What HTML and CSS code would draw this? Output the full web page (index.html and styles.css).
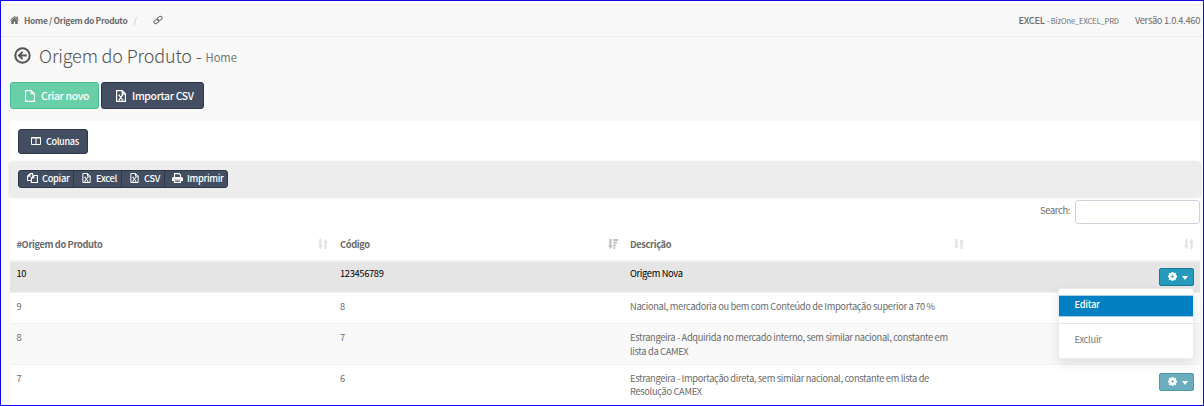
FILE: index.html
```html
<!DOCTYPE html>
<html lang="pt-BR">
<head>
<meta charset="utf-8">
<title>Origem do Produto</title>
<link rel="stylesheet" href="styles.css">
</head>
<body>
<svg class="defs" aria-hidden="true">
  <symbol id="sort" viewBox="0 0 10 10"><path d="M1.3 0h2.2v6.6H5L2.5 10 0 6.6h1.3zM6.4 10h2.2V3.4H10L7.5 0 5 3.4h1.4z"/></symbol>
  <symbol id="sort-desc" viewBox="0 0 10 10"><path d="M1.3 0h2.2v6.6H5L2.5 10 0 6.6h1.3zM5.3 0H10v2H5.3zM5.3 2.8h3.8v1.8H5.3zM5.3 5.4h2.8v1.8H5.3zM5.3 8H7.2v2H5.3z"/></symbol>
  <symbol id="excel" viewBox="0 0 10 12"><path d="M.6.6h5.6l3.2 3.2v7.6H.6zM6.2.6v3.2h3.2M3 5.2l3.6 4.6M6.6 5.2 3 9.8M2.5 5.2h1.6M5.6 5.2h1.6M2.5 9.8h1.6M5.6 9.8h1.6" fill="none" stroke="currentColor" stroke-width="1.2"/></symbol>
  <symbol id="gear" viewBox="0 0 10 10"><path fill-rule="evenodd" d="M4 0h2l.3 1.1.8.35L8.2.8l1 1-.65 1.1.35.8L10 4v2l-1.1.3-.35.8.65 1.1-1 1-1.1-.65-.8.35L6 10H4l-.3-1.1-.8-.35-1.1.65-1-1 .65-1.1-.35-.8L0 6V4l1.1-.3.35-.8L.8 1.8l1-1 1.1.65.8-.35zM5 3.7a1.3 1.3 0 1 0 0 2.6 1.3 1.3 0 0 0 0-2.6z"/></symbol>
</svg>
<div class="page">
  <header class="topbar">
    <nav class="crumbs">
      <svg class="home" viewBox="0 0 9 8"><path d="M4.5 0 6.6 1.8V.5h1.3v2.4L9 4l-.6.6-3.9-3.3L.6 4.6 0 4zM1.3 4.4 4.5 1.7l3.2 2.7V8H5.2V5.6H3.8V8H1.3z"/></svg>
      <b>Home / Origem do Produto</b><span class="slash">/</span>
      <svg class="link" viewBox="0 0 10 10"><g fill="none" stroke="currentColor" stroke-width="1"><rect x="4" y="1.8" width="5.2" height="3.4" rx="1.7" transform="rotate(-35 6.6 3.5)"/><rect x=".8" y="4.8" width="5.2" height="3.4" rx="1.7" transform="rotate(-35 3.4 6.5)"/></g></svg>
    </nav>
    <div class="env"><b>EXCEL</b><small>- BizOne_EXCEL_PRD</small></div>
    <div class="version">Versão 1.0.4.460</div>
  </header>
  <h1 class="title">
    <svg class="back" viewBox="0 0 17 17"><circle cx="8.5" cy="8.5" r="7.2" fill="none" stroke="currentColor" stroke-width="2"/><path d="M3.5 8.5 8 4.2l1.2 1.2-2 2h5.6v2.2H7.2l2 2L8 12.8z"/></svg>
    <span class="name">Origem do Produto -</span><small>Home</small>
  </h1>
  <div class="actions">
    <button class="btn new"><svg class="i-file" viewBox="0 0 10 12"><path d="M.6.6h5.6l3.2 3.2v7.6H.6zM6.2.6v3.2h3.2" fill="none" stroke="currentColor" stroke-width="1.1"/></svg><span>Criar novo</span></button>
    <button class="btn dark"><svg class="i-file"><use href="#excel"/></svg><span>Importar CSV</span></button>
  </div>
  <main class="panel">
    <button class="btn dark columns"><svg class="i-cols" viewBox="0 0 10 8"><path d="M.5.5h9v7h-9zM5 .5v7M0 1h10" fill="none" stroke="currentColor"/></svg><span>Colunas</span></button>
    <div class="toolbar">
      <div class="group">
        <button class="copy"><svg viewBox="0 0 11 10"><path d="M3 .6h2.6v2M3 .6.6 3v4.5h3.6M3 .6v2.5H.6M6.8 2.5h3.6v7H4.4V5zM6.8 2.5V5H4.4" fill="none" stroke="currentColor" stroke-width="1.1"/></svg><span>Copiar</span></button>
        <button class="xls"><svg><use href="#excel"/></svg><span>Excel</span></button>
        <button class="csv"><svg><use href="#excel"/></svg><span>CSV</span></button>
        <button class="print"><svg viewBox="0 0 11 10"><path d="M2.5 4.5V.6h4.6l1.4 1.4v2.5M2.5 7h6v2.4h-6z" fill="none" stroke="currentColor" stroke-width="1.1"/><path d="M1.3 4h8.4L11 5v3H9V6.5H2V8H0V5z"/></svg><span>Imprimir</span></button>
      </div>
    </div>
    <div class="search"><label for="q">Search:</label><input id="q" type="text"></div>
    <div class="table">
      <div class="row head">
        <div><b>#Origem do Produto</b><svg><use href="#sort"/></svg></div>
        <div><b>Código</b><svg class="on"><use href="#sort-desc"/></svg></div>
        <div><b>Descrição</b><svg><use href="#sort"/></svg></div>
        <div><svg><use href="#sort"/></svg></div>
      </div>
      <div class="row r1 selected">
        <div>10</div><div>123456789</div><div>Origem Nova</div>
        <div class="act">
          <button class="cog"><svg><use href="#gear"/></svg><i></i></button>
          <div class="menu"><a class="active">Editar</a><hr><a>Excluir</a></div>
        </div>
      </div>
      <div class="row r2"><div>9</div><div>8</div><div>Nacional, mercadoria ou bem com Conteúdo de Importação superior a 70 %</div><div></div></div>
      <div class="row r3"><div>8</div><div>7</div><div>Estrangeira - Adquirida no mercado interno, sem similar nacional, constante em<br>lista da CAMEX</div><div></div></div>
      <div class="row r4"><div>7</div><div>6</div><div>Estrangeira - Importação direta, sem similar nacional, constante em lista de<br>Resolução CAMEX</div><div class="act"><button class="cog faded"><svg><use href="#gear"/></svg><i></i></button></div></div>
    </div>
  </main>
</div>
</body>
</html>
```
FILE: styles.css
```css
* { box-sizing: border-box; }
body { margin: 0; overflow: hidden; }
.defs { position: absolute; width: 0; height: 0; }
svg { fill: currentColor; flex: none; }
.page {
  width: 1204px; height: 406px; overflow: hidden;
  border: 1px solid #1407f0; background: #f9f9f9;
  font: 9.3px/14px "Noto Sans CJK SC", "Noto Sans", sans-serif;
  letter-spacing: -.33px;
  color: #6b6b6b;
}
button { font: inherit; letter-spacing: inherit; margin: 0; padding: 0; display: flex; align-items: center; white-space: nowrap; }
.topbar {
  height: 36px; border-top: 3px solid #fff; border-bottom: 1px solid #ececec;
  box-shadow: inset 0 1px #ececec; display: flex; align-items: center;
  padding: 0 3px 0 9px; white-space: nowrap;
}
.crumbs { display: flex; align-items: center; flex: 1; font-size: 8.5px; letter-spacing: -.35px; }
.home { width: 9px; height: 8px; margin-right: 5px; }
.slash { color: #bbb; margin-left: 6px; }
.link { width: 10px; height: 10px; margin-left: 17px; }
.env b { font-size: 9.3px; font-weight: 500; letter-spacing: -.3px; }
.env small { font-size: 7.5px; margin-left: 2px; letter-spacing: -.1px; }
.version { margin-left: 16px; font-size: 9.3px; letter-spacing: -.3px; }
.title { height: 45px; margin: 0; padding: 0 0 7px 13px; display: flex; align-items: center; font-weight: 300; color: #515253; line-height: 24px; letter-spacing: -.15px; }
.back { width: 17px; height: 17px; margin: -2px 8px 0 0; }
.name { font-size: 18px; margin-top: -3px; }
.title small { font-size: 11.3px; font-weight: 400; color: #777; margin: 2px 0 0 4px; }
.actions { display: flex; gap: 2px; padding-left: 9px; height: 39px; align-items: flex-start; }
.btn { height: 27px; border-radius: 3px; border: 1px solid #2e3748; color: #fff; font-size: 10.4px; font-weight: 500; padding-left: 14px; }
.btn.dark { background: #434e62; width: 103px; }
.btn.new { background: #68cfa9; border-color: #45c08d; width: 89px; }
.i-file { width: 10px; height: 12px; margin-right: 6px; }
.panel { margin: 0 3px 0 9px; background: #fff; height: 285px; padding-top: 8px; }
.btn.columns { width: 70px; height: 25px; margin-left: 8px; font-size: 9.2px; padding: 0 0 1px 12px; letter-spacing: -.4px; }
.i-cols { width: 10px; height: 8px; margin-right: 5px; }
.toolbar { height: 35px; margin-top: 8px; padding: 8px; background: #ededed; border-radius: 3px; box-shadow: 0 0 3px rgba(0,0,0,.18); }
.group { display: flex; width: 210px; height: 18px; background: #434e62; border: 1px solid #2e3748; border-radius: 3px; overflow: hidden; }
.group button { border: 0; background: none; color: #fff; font-weight: 500; height: 16px; border-right: 1px solid #2e3748; padding-bottom: 3px; }
.group svg { width: 9px; height: 10px; margin-right: 5px; }
.group .copy { width: 55px; padding-left: 8px; }
.group .copy svg, .group .print svg { width: 11px; margin-right: 4px; }
.group .xls { width: 48px; padding-left: 8px; }
.group .csv { width: 43px; padding-left: 8px; }
.group .print { border-right: 0; padding-left: 7px; }
.search { display: flex; justify-content: flex-end; height: 33px; padding-top: 3px; line-height: 21px; }
.search input { width: 125px; height: 24px; margin-left: 5px; padding: 0; border: 1px solid #d2d2de; border-radius: 3px; background: #fff; }
.row { display: grid; grid-template-columns: 324px 290px 346px 230px; border-bottom: 1px solid #f2f2f2; padding-top: 6px; }
.row > div { padding-left: 6px; white-space: nowrap; }
.row > div:first-child { padding-left: 6.5px; }
.head { height: 32px; border-bottom: 2px solid #f1f1f1; padding-top: 7px; }
.head > div { display: flex; justify-content: space-between; align-items: center; height: 14px; padding-right: 6.5px; letter-spacing: -.38px; }
.head > div:nth-child(3) { padding-right: 6px; }
.head svg { width: 10px; height: 10px; color: #e2e2e2; margin-left: auto; }
.head .on { color: #c0c0c0; }
.r1 { height: 31px; padding-top: 5px; }
.r1 > div:not(.act) { line-height: 13px; }
.r2 { height: 31px; padding-top: 6px; }
.r3 { height: 41px; background: #f9f9f9; }
.r4 { height: 40px; border: 0; line-height: 13px; padding-top: 7px; }
.selected { background: #e5e5e5; color: #000; }
.act { position: relative; display: flex; justify-content: flex-end; align-items: flex-start; }
.row > .act { padding-right: 6px; }
.cog { width: 35px; height: 18px; border: 1px solid #1c7894; border-radius: 2px; background: #269abc; color: #fff; padding-left: 8px; }
.r1 .cog { margin-top: 1px; }
.r4 .cog { margin-top: 1px; }
.cog.faded { background: #6badbd; border-color: #4b9bad; }
.cog svg { width: 9px; height: 9px; margin: -1px 5px 0 0; }
.cog i { border: 3.5px solid transparent; border-top: 4px solid #fff; border-bottom: 0; margin-top: 2px; }
.menu { position: absolute; z-index: 2; right: 6px; top: 21px; width: 136px; height: 71px; background: #fff; border: 1px solid #ebebeb; border-radius: 3px; padding-top: 6px; box-shadow: 0 5px 12px rgba(0,0,0,.1); color: #777; letter-spacing: -.25px; }
.menu a { display: block; height: 22px; padding-left: 15.5px; line-height: 19px; }
.menu .active { background: #0080c3; color: #fff; font-weight: 500; border-top: 1px solid #a9d2ea; border-bottom: 1px solid #a9d2ea; line-height: 17px; }
.menu hr { height: 1px; margin: 6px 0; border: 0; background: #e7e7e7; }
```
